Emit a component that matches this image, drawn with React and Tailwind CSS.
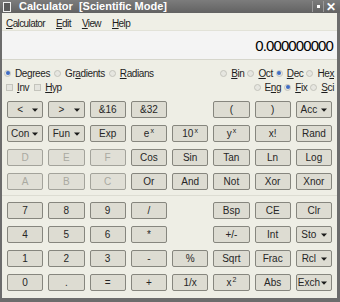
import React from "react";

const font = { fontFamily: '"Liberation Sans", Arial, sans-serif' };

function Arrow() {
  return (
    <svg width="6" height="4" viewBox="0 0 6 4" className="shrink-0">
      <path d="M0 0.5h6L3 3.8z" fill="#1a1a1a" />
    </svg>
  );
}

function Btn({ children, dis, drop }) {
  const look = dis
    ? "text-[#a9a9a1] border-[#a3a39b] bg-[#e0dfd6]"
    : "text-[#262626] border-[#86867e] bg-[#dddcd2]";
  if (drop) {
    return (
      <div className={`h-[17px] rounded-[2px] border flex items-center pr-[4px] text-[10px] ${look}`}>
        <span className="flex-1 text-center leading-none">{children}</span>
        <Arrow />
      </div>
    );
  }
  return (
    <div className={`h-[17px] rounded-[2px] border flex items-center justify-center text-[10px] leading-none ${look}`}>
      {children}
    </div>
  );
}

function Radio({ on }) {
  return (
    <span className="w-[7px] h-[7px] rounded-full border border-[#c4c4bc] bg-[#e6e6e0] flex items-center justify-center shrink-0">
      {on && <span className="w-[4px] h-[4px] rounded-full bg-[#3f6cc4]" />}
    </span>
  );
}

function Check() {
  return <span className="w-[7px] h-[7px] border border-[#c4c4bc] bg-[#e4e4de] shrink-0" />;
}

function U({ children }) {
  return <span className="underline underline-offset-1">{children}</span>;
}

function Opt({ on, children, check }) {
  return (
    <span className="flex items-center gap-[4px]">
      {check ? <Check /> : <Radio on={on} />}
      <span>{children}</span>
    </span>
  );
}

const sup = (b, e) => (
  <span className="flex items-start">
    <span>{b}</span>
    <span className="text-[7px] leading-none relative -top-[2px] ml-[1px]">{e}</span>
  </span>
);

export default function App() {
  const top = [
    [["<", 0, 1], [">", 0, 1], ["&16"], ["&32"], null, ["("], [")"], ["Acc", 0, 1]],
    [["Con", 0, 1], ["Fun", 0, 1], ["Exp"], [sup("e", "x")], [sup("10", "x")], [sup("y", "x")], ["x!"], ["Rand"]],
    [["D", 1], ["E", 1], ["F", 1], ["Cos"], ["Sin"], ["Tan"], ["Ln"], ["Log"]],
    [["A", 1], ["B", 1], ["C", 1], ["Or"], ["And"], ["Not"], ["Xor"], ["Xnor"]],
  ];
  const bottom = [
    [["7"], ["8"], ["9"], ["/"], null, ["Bsp"], ["CE"], ["Clr"]],
    [["4"], ["5"], ["6"], ["*"], null, ["+/-"], ["Int"], ["Sto", 0, 1]],
    [["1"], ["2"], ["3"], ["-"], ["%"], ["Sqrt"], ["Frac"], ["Rcl", 0, 1]],
    [["0"], ["."], ["="], ["+"], ["1/x"], [sup("x", "2")], ["Abs"], ["Exch", 0, 1]],
  ];
  const grid = (rows) =>
    rows.map((r, i) =>
      r.map((b, j) =>
        b ? (
          <Btn key={`${i}-${j}`} dis={b[1]} drop={b[2]}>
            {b[0]}
          </Btn>
        ) : (
          <div key={`${i}-${j}`} />
        )
      )
    );

  return (
    <div style={font} className="w-[340px] h-[302px] bg-[#6c6c6c] flex flex-col overflow-hidden">
      {/* title bar */}
      <div className="h-[13px] flex items-center bg-gradient-to-b from-[#7c7c7c] to-[#626262] shrink-0">
        <span className="ml-[3px] w-[8px] h-[10px] border border-[#f0f0f0] bg-[#5a5a5a]" />
        <span className="ml-[8px] text-white font-bold text-[11px] leading-none">
          Calculator&nbsp;&nbsp;[Scientific Mode]
        </span>
        <span className="ml-auto flex items-center h-full">
          <span className="w-px h-[11px] bg-[#9a9a9a]" />
          <span className="w-[10px] flex justify-center">
            <span className="w-[3px] h-[3px] bg-white" />
          </span>
          <span className="w-px h-[11px] bg-[#9a9a9a]" />
          <span className="w-[13px] text-white font-bold text-[12px] leading-none text-center">✕</span>
        </span>
        <span className="w-[3px]" />
      </div>
      {/* body */}
      <div className="flex-1 ml-[2px] mr-[3px] mb-[4px] bg-[#eeeee5] flex flex-col text-[10px] tracking-[-0.4px] text-[#1e1e1e]">
        <div className="h-[18px] shrink-0 flex items-center gap-[11px] pl-[4px] pt-[4px] bg-[#efefe6] border-b border-[#e2e2d8] tracking-[-0.6px]">
          <span><U>C</U>alculator</span>
          <span><U>E</U>dit</span>
          <span><U>V</U>iew</span>
          <span><U>H</U>elp</span>
        </div>
        <div className="h-[29px] shrink-0 bg-[#f4f4f4] flex items-center justify-end pr-[4px] pt-[2px] text-[15px] tracking-[-0.9px] text-black border-b border-[#d6d6cc]">
          0.000000000
        </div>
        <div className="h-[14px] mt-[6px] flex items-center justify-between pl-[2px] pr-[3px]">
          <div className="flex items-center gap-[4px]">
            <Opt on>De<U>g</U>rees</Opt>
            <Opt>Gr<U>a</U>dients</Opt>
            <Opt><U>R</U>adians</Opt>
          </div>
          <div className="flex items-center gap-[3px]">
            <Opt><U>B</U>in</Opt>
            <Opt><U>O</U>ct</Opt>
            <Opt on><U>D</U>ec</Opt>
            <Opt>He<U>x</U></Opt>
          </div>
        </div>
        <div className="h-[14px] flex items-center justify-between pl-[4px] pr-[3px]">
          <div className="flex items-center gap-[5px]">
            <Opt check><U>I</U>nv</Opt>
            <Opt check><U>H</U>yp</Opt>
          </div>
          <div className="flex items-center gap-[3px]">
            <Opt>E<U>n</U>g</Opt>
            <Opt on><U>F</U>ix</Opt>
            <Opt><U>S</U>ci</Opt>
          </div>
        </div>
        <div className="mt-[7px] px-[5px] grid grid-cols-8 gap-x-[5px] gap-y-[7px] tracking-normal">
          {grid(top)}
        </div>
        <div className="mt-[5px] border-t border-[#dcdcd2] pt-[6px] px-[5px] grid grid-cols-8 gap-x-[5px] gap-y-[7px] tracking-normal">
          {grid(bottom)}
        </div>
      </div>
    </div>
  );
}
